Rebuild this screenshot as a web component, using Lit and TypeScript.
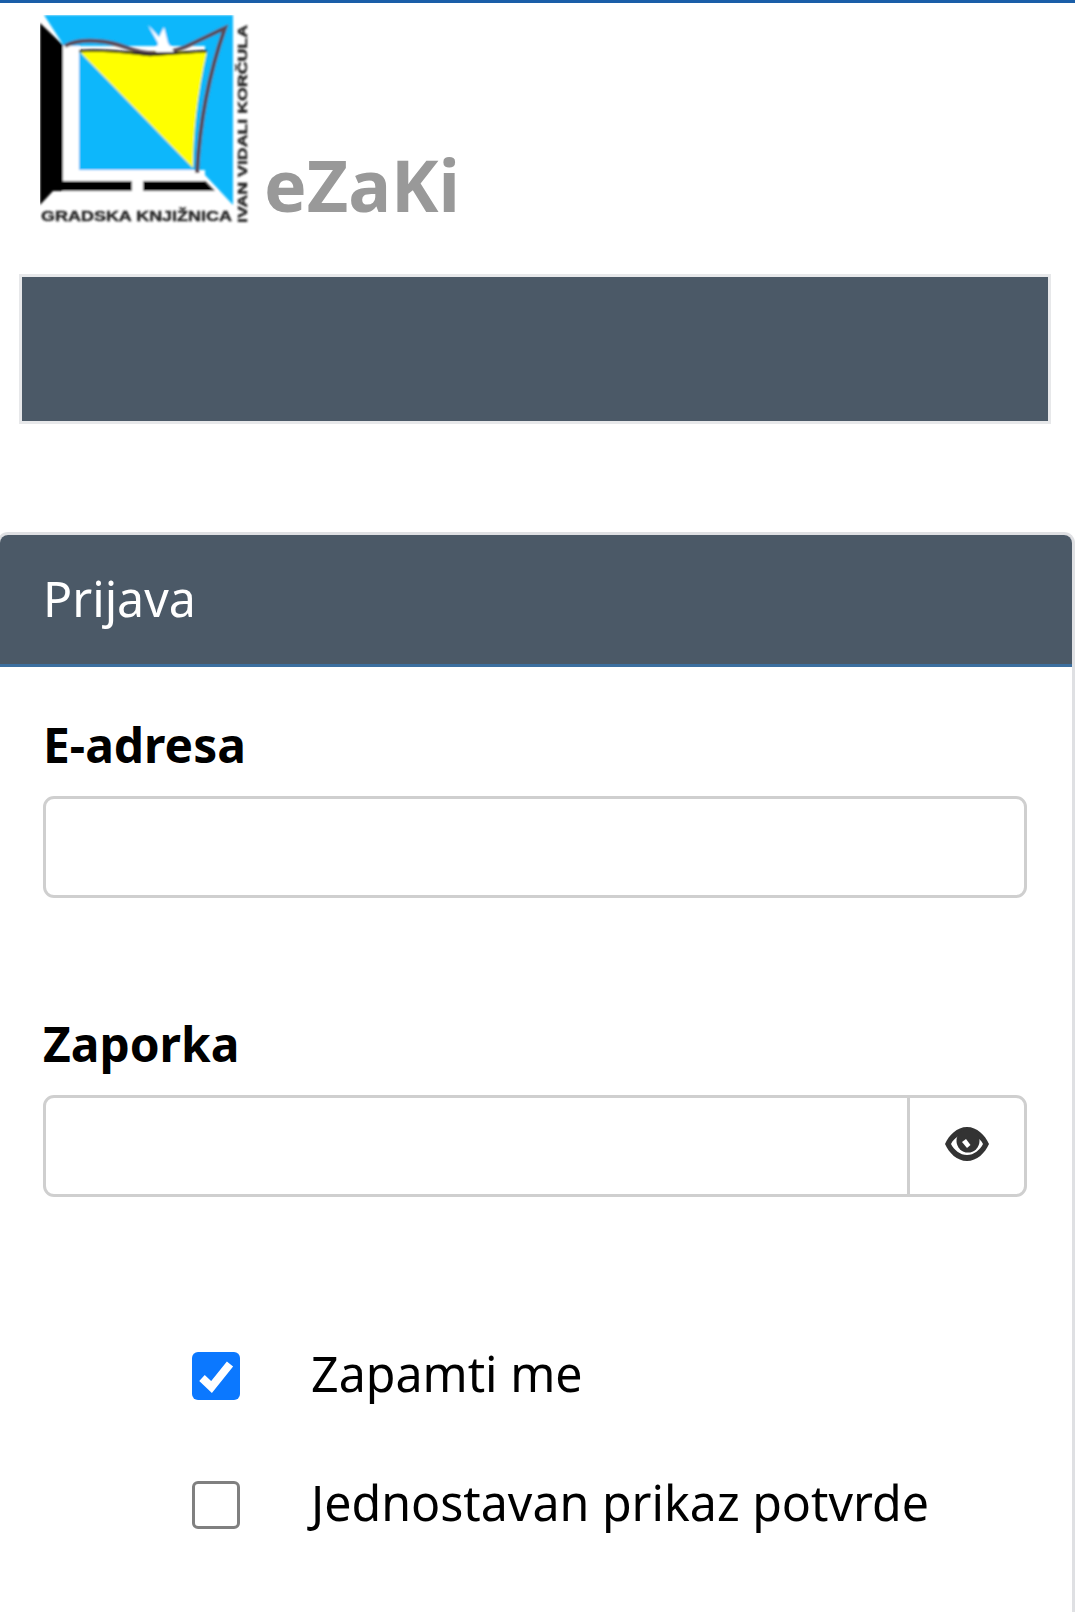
import { LitElement, html, css, svg } from "lit";
import { customElement } from "lit/decorators.js";

const logo = svg`
<svg class="logo" viewBox="0 0 210 210" width="210" height="210" xmlns="http://www.w3.org/2000/svg">
  <defs><filter id="b" x="-5%" y="-5%" width="110%" height="110%"><feGaussianBlur stdDeviation="1"/></filter></defs>
  <rect width="210" height="210" fill="#fff"/>
  <g filter="url(#b)">
    <polygon points="4,0 193,0 193,190 165,160 165,31 24,31" fill="#0db7fb"/>
    <polygon points="39,36 167,36 167,155 39,155" fill="#0db7fb"/>
    <polygon points="23,31 39,31 39,155 153,155 177,177 23,177" fill="#fff"/>
    <path d="M39 36 L167 36 C157 80 153 120 153 153 Z" fill="#ff0"/>
    <path d="M0 8 L23 30 L23 166 L92 166 L92 176 L13 176 L0 190 Z" fill="#000"/>
    <polygon points="103,166 165,166 175,176 103,176" fill="#000"/>
    <path d="M25 31 C42 22 70 26 88 33 C110 42 130 38 145 32 C158 26 170 20 185 13 C172 50 160 100 157 158" fill="none" stroke="#5b4a55" stroke-width="4"/>
    <path d="M39 36 C70 34 90 38 110 40 L167 36" fill="none" stroke="#111" stroke-width="2.5"/>
    <path d="M108 10 L119 22 L124 12 L128 28 L134 37 L116 37 L118 28 Z" fill="#fff"/>
    <text x="1" y="206" class="lt" textLength="191" lengthAdjust="spacingAndGlyphs">GRADSKA KNJIŽNICA</text>
    <text transform="translate(207,208) rotate(-90)" class="lt side" textLength="198" lengthAdjust="spacingAndGlyphs">IVAN VIDALI KORČULA</text>
  </g>
</svg>`;

const eye = svg`
<svg class="eye" viewBox="0 0 44 34" width="44" height="34" xmlns="http://www.w3.org/2000/svg">
  <path fill-rule="evenodd" fill="#333" d="M22 0C32 0 40 8 44 17C40 26 32 34 22 34C12 34 4 26 0 17C4 8 12 0 22 0ZM22 7C15 7 9 11 6 17C9 23 15 28 22 28C29 28 35 23 38 17C35 11 29 7 22 7Z"/>
  <circle cx="23" cy="14" r="11.5" fill="#333"/>
  <path d="M17 15L21 12L25.5 18L22 21Z" fill="#fff"/>
</svg>`;

const check = svg`
<svg viewBox="0 0 48 48" width="48" height="48" xmlns="http://www.w3.org/2000/svg">
  <path d="M10 26L19.5 35L38 12" fill="none" stroke="#fff" stroke-width="8"/>
</svg>`;

@customElement("app-root")
export class AppRoot extends LitElement {
  static styles = css`
    :host {
      display: block;
      height: 1612px;
      overflow: hidden;
      background: #fff;
      color: #000;
      font-family: "Noto Sans", "Open Sans", sans-serif;
    }
    .page { border-top: 3px solid #1a5ea8; }
    .brand {
      display: flex;
      align-items: flex-end;
      gap: 14px;
      padding: 12px 0 0 40px;
      height: 210px;
    }
    .logo { display: block; flex: none; }
    .lt { font: 700 14px "Liberation Sans", sans-serif; fill: #222; stroke: #222; stroke-width: 0.4; }
    .lt.side { font-size: 12px; }
    .title {
      font-size: 71.6px;
      font-weight: 700;
      line-height: 71px;
      color: #999;
      margin-bottom: 5px;
    }
    .banner {
      box-sizing: border-box;
      margin: 49px 0 0 19px;
      width: 1032px;
      height: 150px;
      background: #4b5967;
      border: 3px solid #e7e8ea;
    }
    .card {
      box-sizing: border-box;
      margin: 108px 0 0 -3px;
      width: 1078px;
      height: 1100px;
      border: 3px solid #dfe0e3;
      border-bottom: none;
      border-radius: 11px 11px 0 0;
    }
    .card-head {
      box-sizing: border-box;
      height: 132px;
      padding: 0 0 4px 43px;
      display: flex;
      align-items: center;
      background: #4b5967;
      border-bottom: 3px solid #3c6f9f;
      border-radius: 8px 8px 0 0;
      color: #fff;
      font-size: 48.3px;
    }
    .card-body { padding: 48px 45px 0 43px; }
    .label {
      font-size: 47.9px;
      font-weight: 700;
      line-height: 60px;
      margin-bottom: 21px;
    }
    .field {
      box-sizing: border-box;
      height: 102px;
      border: 3px solid #cfcfcf;
      border-radius: 11px;
      display: flex;
      margin-bottom: 116px;
    }
    .field .input { flex: 1; }
    .field .addon {
      width: 117px;
      border-left: 3px solid #cfcfcf;
      display: flex;
      align-items: center;
      justify-content: center;
      padding-bottom: 4px;
      box-sizing: border-box;
    }
    .eye { display: block; }
    .checks {
      margin-top: 155px;
      padding-left: 149px;
      display: flex;
      flex-direction: column;
      gap: 81px;
    }
    .check-row { display: flex; align-items: center; gap: 71px; height: 48px; }
    .box {
      box-sizing: border-box;
      width: 48px;
      height: 48px;
      border-radius: 6px;
      flex: none;
    }
    .box.on { background: #0b78ff; }
    .box.off { border: 3px solid #808080; }
    .box svg { display: block; }
    .check-row span { font-size: 48.3px; line-height: 60px; padding-bottom: 6px; }
  `;

  render() {
    return html`
      <div class="page">
        <div class="brand">${logo}<div class="title">eZaKi</div></div>
        <div class="banner"></div>
        <div class="card">
          <div class="card-head">Prijava</div>
          <div class="card-body">
            <div class="label">E-adresa</div>
            <div class="field"><div class="input"></div></div>
            <div class="label">Zaporka</div>
            <div class="field">
              <div class="input"></div>
              <div class="addon">${eye}</div>
            </div>
            <div class="checks">
              <div class="check-row"><div class="box on">${check}</div><span>Zapamti me</span></div>
              <div class="check-row"><div class="box off"></div><span>Jednostavan prikaz potvrde</span></div>
            </div>
          </div>
        </div>
      </div>
    `;
  }
}
